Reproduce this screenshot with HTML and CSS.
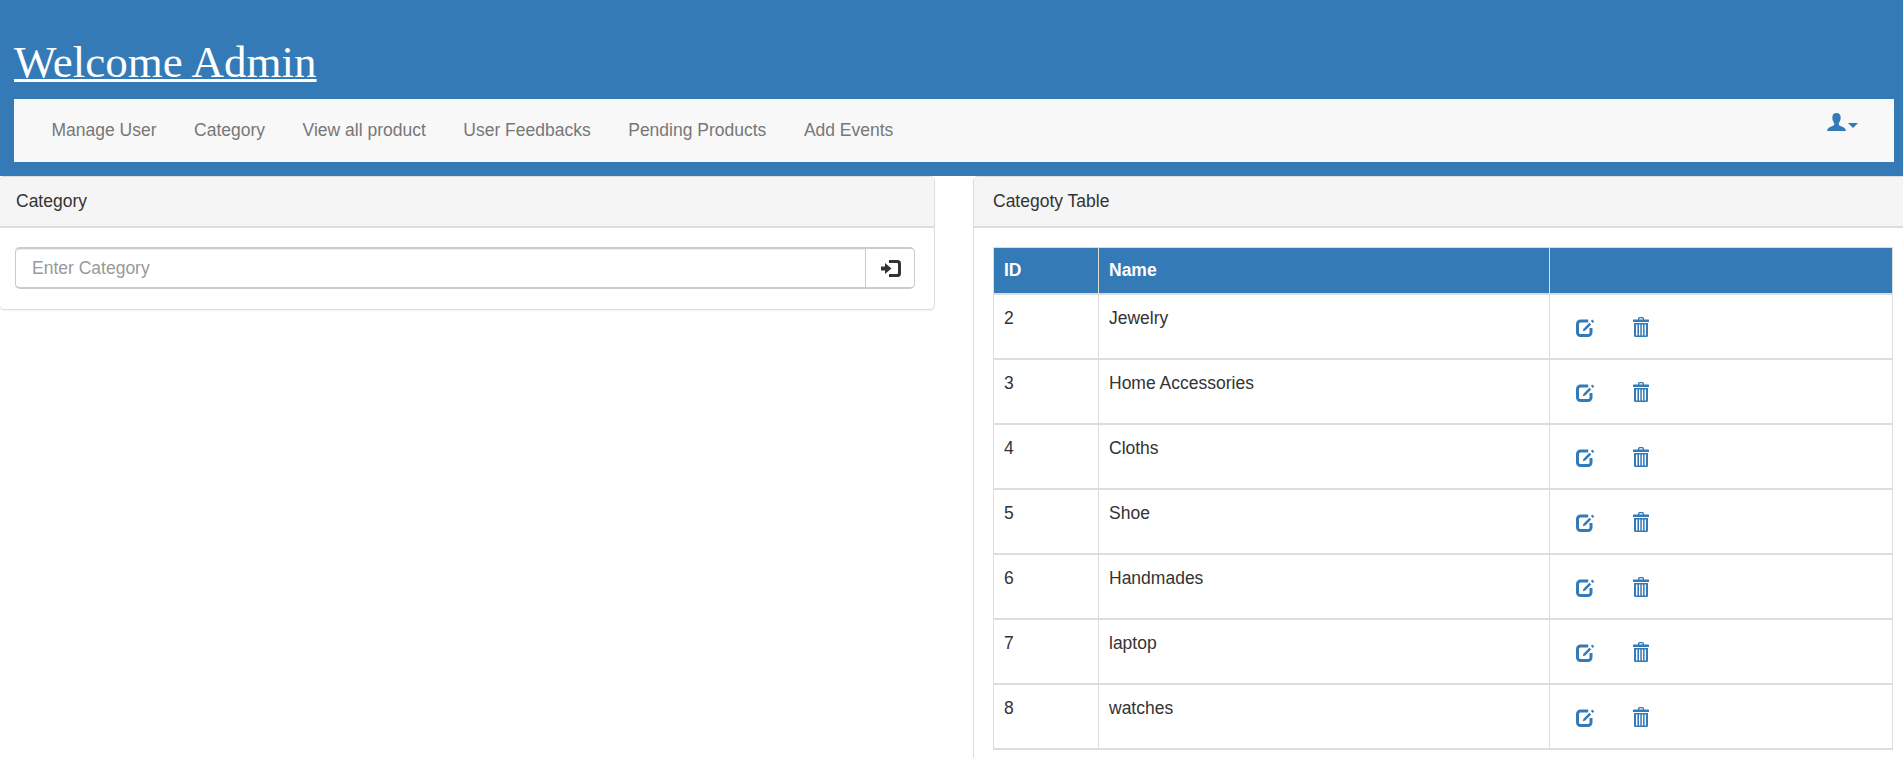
FILE: index.html
```html
<!DOCTYPE html>
<html lang="en">
<head>
<meta charset="utf-8">
<title>Welcome Admin</title>
<link rel="stylesheet" href="styles.css">
</head>
<body>
<svg class="defs" width="0" height="0" aria-hidden="true">
  <symbol id="i-edit" viewBox="0 0 19 18">
    <path d="M12.2 2H4.500A3 3 0 0 0 1.500 5v8.500a3 3 0 0 0 3 3H12a3 3 0 0 0 3-3V9" fill="none" stroke="currentColor" stroke-width="3"/>
    <path d="M13.400 3.800l1.800 1.800-5.900 6-2.500.7.700-2.500z"/>
    <path d="M16.300 .6l1.900 1.900-1.400 1.400-1.900-1.900z"/>
  </symbol>
  <symbol id="i-trash" viewBox="0 0 16 20">
    <path d="M5 2.500V1.700C5 .8 5.700 0 6.600 0h2.800c.9 0 1.600.8 1.600 1.700v.8h4.500A.6.600 0 0 1 16 3.100V5H0V3.100a.6.600 0 0 1 .5-.6zM6.300 2.500h3.400v-.8a.4.400 0 0 0-.4-.4H6.700a.4.400 0 0 0-.4.400z"/>
    <path d="M1 6h14v12.500a1.500 1.500 0 0 1-1.500 1.500h-11A1.500 1.500 0 0 1 1 18.500zM3 7.500v11h1.400v-11zm3 0v11h1.300v-11zm2.800 0v11h1.300v-11zm2.800 0v11H13v-11z" fill-rule="evenodd"/>
  </symbol>
  <symbol id="i-user" viewBox="0 0 19 18">
    <path d="M9.500 0c2.800 0 4.200 2 4.200 4.800 0 2.200-.9 4-1.900 5.100v1.500c0 .7 1 1.300 2.900 2 2.600 1 4 2 4.300 4.600H0c.3-2.600 1.700-3.600 4.300-4.600 1.900-.7 2.900-1.300 2.900-2V9.900c-1-1.100-1.900-2.900-1.900-5.100C5.300 2 6.700 0 9.500 0z"/>
  </symbol>
  <symbol id="i-login" viewBox="0 0 20 17">
    <path d="M0 6.500h4V3l6.500 5.500L4 14v-3.500H0z"/>
    <path d="M8 0h8.500A3.500 3.500 0 0 1 20 3.500v10a3.500 3.500 0 0 1-3.500 3.500H8v-3h8a1 1 0 0 0 1-1V4a1 1 0 0 0-1-1H8z"/>
  </symbol>
</svg>

<header class="banner">
  <h1 class="title"><a href="#">Welcome Admin</a></h1>
  <nav class="navbar">
    <ul class="nav-links">
      <li><a href="#">Manage User</a></li>
      <li><a href="#">Category</a></li>
      <li><a href="#">View all product</a></li>
      <li><a href="#">User Feedbacks</a></li>
      <li><a href="#">Pending Products</a></li>
      <li><a href="#">Add Events</a></li>
    </ul>
    <a class="user-menu" href="#">
      <svg class="icon-user"><use href="#i-user"/></svg>
      <span class="caret"></span>
    </a>
  </nav>
</header>

<main class="row">
  <section class="panel panel-left">
    <div class="panel-heading">Category</div>
    <div class="panel-body">
      <div class="input-group">
        <input class="form-control" type="text" placeholder="Enter Category">
        <button class="addon" type="button"><svg class="icon-login"><use href="#i-login"/></svg></button>
      </div>
    </div>
  </section>

  <section class="panel panel-right">
    <div class="panel-heading">Categoty Table</div>
    <div class="panel-body">
      <table class="table">
        <thead>
          <tr><th class="col-id">ID</th><th class="col-name">Name</th><th></th></tr>
        </thead>
        <tbody>
          <tr><td>2</td><td>Jewelry</td><td><div class="actions"><a href="#"><svg class="icon-edit"><use href="#i-edit"/></svg></a><a href="#"><svg class="icon-trash"><use href="#i-trash"/></svg></a></div></td></tr>
          <tr><td>3</td><td>Home Accessories</td><td><div class="actions"><a href="#"><svg class="icon-edit"><use href="#i-edit"/></svg></a><a href="#"><svg class="icon-trash"><use href="#i-trash"/></svg></a></div></td></tr>
          <tr><td>4</td><td>Cloths</td><td><div class="actions"><a href="#"><svg class="icon-edit"><use href="#i-edit"/></svg></a><a href="#"><svg class="icon-trash"><use href="#i-trash"/></svg></a></div></td></tr>
          <tr><td>5</td><td>Shoe</td><td><div class="actions"><a href="#"><svg class="icon-edit"><use href="#i-edit"/></svg></a><a href="#"><svg class="icon-trash"><use href="#i-trash"/></svg></a></div></td></tr>
          <tr><td>6</td><td>Handmades</td><td><div class="actions"><a href="#"><svg class="icon-edit"><use href="#i-edit"/></svg></a><a href="#"><svg class="icon-trash"><use href="#i-trash"/></svg></a></div></td></tr>
          <tr><td>7</td><td>laptop</td><td><div class="actions"><a href="#"><svg class="icon-edit"><use href="#i-edit"/></svg></a><a href="#"><svg class="icon-trash"><use href="#i-trash"/></svg></a></div></td></tr>
          <tr><td>8</td><td>watches</td><td><div class="actions"><a href="#"><svg class="icon-edit"><use href="#i-edit"/></svg></a><a href="#"><svg class="icon-trash"><use href="#i-trash"/></svg></a></div></td></tr>
        </tbody>
      </table>
    </div>
  </section>
</main>
</body>
</html>
```

FILE: styles.css
```css
* { box-sizing: border-box; }

html, body {
  margin: 0;
  height: 758px;
  overflow: hidden;
  background: #fff;
}

body {
  font-family: "Liberation Sans", Arial, sans-serif;
  font-size: 17.5px;
  line-height: 25px;
  color: #333;
}

.defs { display: block; height: 0; }

.banner {
  height: 176px;
  padding: 37px 9px 14px 14px;
  background: #337ab7;
  display: flex;
  flex-direction: column;
}

.title {
  margin: 0 0 11px;
  height: 51px;
  font-family: "Liberation Serif", "Times New Roman", serif;
  font-size: 45px;
  font-weight: 400;
  line-height: 51px;
}

.title a {
  color: #fff;
  text-decoration-thickness: 3px;
}

.navbar {
  height: 63px;
  display: flex;
  justify-content: space-between;
  background: #f8f8f8;
}

.nav-links {
  display: flex;
  gap: 37.5px;
  margin: 0;
  padding: 19px 0 0 37.5px;
  list-style: none;
}

.nav-links a {
  color: #777;
  text-decoration: none;
}

.user-menu {
  display: flex;
  gap: 2px;
  padding: 14px 36px 0 0;
  color: #337ab7;
}

.icon-user {
  width: 19px;
  height: 18px;
  fill: currentColor;
}

.caret {
  width: 0;
  height: 0;
  margin-top: 10px;
  border-top: 5px solid #337ab7;
  border-left: 5px solid transparent;
  border-right: 5px solid transparent;
}

.row {
  display: flex;
  align-items: flex-start;
  gap: 38px;
  margin: 0 -20px 0 -1px;
}

.panel {
  border: 1px solid #ddd;
  border-radius: 5px;
  background: #fff;
  box-shadow: 0 1px 1px rgba(0, 0, 0, .05);
}

.panel-left { width: 936px; flex: none; }
.panel-right { flex: 1; min-width: 0; }

.panel-heading {
  height: 51px;
  padding: 12px 15px 0 16px;
  background: #f5f5f5;
  border-bottom: 2px solid #ddd;
  border-radius: 4px 4px 0 0;
}

.panel-right .panel-heading { padding-left: 19px; }

.panel-body { padding: 19px 19px 20px 15px; }
.panel-right .panel-body { padding: 19px 0 20px 19px; }

.input-group {
  display: flex;
  height: 42px;
}

.form-control {
  flex: 1;
  min-width: 0;
  padding: 0 16px;
  font: inherit;
  color: #555;
  border: 1px solid #ccc;
  border-top-width: 2px;
  border-bottom-width: 2px;
  border-right: 0;
  border-radius: 5px 0 0 5px;
  box-shadow: inset 0 1px 1px rgba(0, 0, 0, .075);
  outline: 0;
}

.form-control::placeholder { color: #999; opacity: 1; }

.addon {
  width: 50px;
  padding: 0 0 0 2px;
  display: flex;
  align-items: center;
  justify-content: center;
  background: #fff;
  color: #333;
  border: 1px solid #ccc;
  border-top-width: 2px;
  border-bottom-width: 2px;
  border-radius: 0 5px 5px 0;
}

.icon-login {
  width: 20px;
  height: 17px;
  fill: currentColor;
}

.table {
  width: 900px;
  table-layout: fixed;
  border-collapse: separate;
  border-spacing: 0;
  border-top: 1px solid #ddd;
  border-left: 1px solid #ddd;
}

.col-id { width: 105px; }
.col-name { width: 451px; }

th, td {
  padding: 10px;
  text-align: left;
  vertical-align: top;
  border-right: 1px solid #ddd;
  border-bottom: 2px solid #ddd;
}

th {
  height: 47px;
  color: #fff;
  background: #337ab7;
}

td {
  height: 65px;
  padding-top: 11px;
}

.actions {
  display: flex;
  align-items: flex-start;
  gap: 38px;
  padding: 11px 0 0 16px;
  color: #337ab7;
}

.actions a { display: block; color: inherit; height: 20px; }

.icon-edit {
  display: block;
  width: 19px;
  height: 18px;
  margin-top: 2px;
  fill: currentColor;
}

.icon-trash {
  display: block;
  width: 16px;
  height: 20px;
  fill: currentColor;
}
```
